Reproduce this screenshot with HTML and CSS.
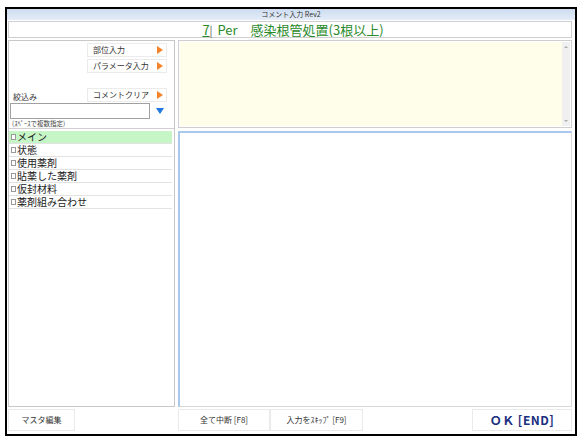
FILE: index.html
```html
<!DOCTYPE html>
<html lang="ja">
<head>
<meta charset="utf-8">
<link rel="stylesheet" href="styles.css">
</head>
<body>
<div class="frame">
  <div class="titlebar">コメント入力 Rev2</div>
  <div class="header"><span class="num">7</span><span class="bar">|</span> Per　感染根管処置(3根以上)</div>
  <div class="main">
    <div class="left">
      <div class="filter">
        <div class="btnrow"><div class="pbtn">部位入力<span class="tri"></span></div></div>
        <div class="btnrow"><div class="pbtn">パラメータ入力<span class="tri"></span></div></div>
        <div class="labelrow">
          <span class="lbl">絞込み</span>
          <div class="pbtn">コメントクリア<span class="tri"></span></div>
        </div>
        <div class="inputrow">
          <div class="input"></div>
          <span class="down"></span>
        </div>
        <div class="hint">(ｽﾍﾟｰｽで複数指定)</div>
      </div>
      <div class="list">
        <div class="item sel"><span class="cb"></span>メイン</div>
        <div class="item"><span class="cb"></span>状態</div>
        <div class="item"><span class="cb"></span>使用薬剤</div>
        <div class="item"><span class="cb"></span>貼薬した薬剤</div>
        <div class="item"><span class="cb"></span>仮封材料</div>
        <div class="item"><span class="cb"></span>薬剤組み合わせ</div>
      </div>
    </div>
    <div class="right">
      <div class="memo">
        <div class="memo-area"></div>
        <div class="scroll"><span class="up"></span><span class="dn"></span></div>
      </div>
      <div class="content"></div>
    </div>
  </div>
  <div class="footer">
    <div class="fbtn master">マスタ編集</div>
    <div class="fbtn stop">全て中断 [F8]</div>
    <div class="fbtn skip">入力をｽｷｯﾌﾟ [F9]</div>
    <div class="spacer"></div>
    <div class="fbtn ok">ＯＫ [END]</div>
  </div>
</div>
</body>
</html>
```

FILE: styles.css
```css
* { box-sizing: border-box; }
html, body { margin: 0; padding: 0; background: #fff; }
body { font-family: "Noto Sans CJK JP", "Noto Sans", sans-serif; color: #222; }

.frame {
  margin: 7px 0 0 5px;
  width: 572px;
  height: 429px;
  border: 2px solid #000;
  display: flex;
  flex-direction: column;
  background: #fff;
}
.titlebar {
  height: 11px;
  background: linear-gradient(#cddcef, #e4edf8);
  font-size: 7px;
  line-height: 11px;
  text-align: center;
  color: #333;
}
.header {
  margin: 1px 3px 0 1px;
  height: 17px;
  border: 1px solid #cfcfcf;
  text-align: center;
  font-size: 13px;
  line-height: 15px;
  color: #2a8a2a;
  padding-left: 6px;
}
.header .num { text-decoration: underline; }
.header .bar { font-size: 11px; color: #555; margin-right: 2px; }

.main {
  flex: 1;
  display: flex;
  gap: 3px;
  margin: 2px 3px 0 1px;
  min-height: 0;
}
.left {
  width: 167px;
  border: 1px solid #c8c8c8;
  display: flex;
  flex-direction: column;
}
.filter {
  height: 88px;
  border-bottom: 1px solid #d0d0d0;
  padding: 2px 0 0 1px;
  display: flex;
  flex-direction: column;
}
.btnrow { display: flex; justify-content: flex-end; padding-right: 7px; margin-bottom: 2px; }
.pbtn {
  position: relative;
  width: 80px;
  height: 14px;
  border: 1px solid #ebebeb;
  background: #fff;
  font-size: 8px;
  line-height: 12px;
  padding-left: 5px;
  color: #333;
}
.tri {
  position: absolute;
  right: 3px;
  top: 2px;
  width: 0; height: 0;
  border-top: 4px solid transparent;
  border-bottom: 4px solid transparent;
  border-left: 6px solid #f5832a;
}
.labelrow {
  margin-top: 13px;
  display: flex;
  justify-content: space-between;
  align-items: flex-end;
  padding-right: 7px;
  padding-left: 3px;
}
.lbl { font-size: 8px; line-height: 10px; color: #333; }
.inputrow { display: flex; align-items: center; margin-top: 1px; }
.input {
  width: 140px;
  height: 16px;
  border: 1px solid #a0a0a0;
  background: #fff;
}
.down {
  margin-left: 6px;
  width: 0; height: 0;
  border-left: 4px solid transparent;
  border-right: 4px solid transparent;
  border-top: 6px solid #1f7be0;
}
.hint { font-size: 6.5px; line-height: 8px; padding-left: 2px; color: #444; margin-top: 0; }

.list { flex: 1; padding: 2px 2px 0 0; }
.item {
  height: 13px;
  border-bottom: 1px solid #e2e2e2;
  font-size: 10px;
  line-height: 12px;
  display: flex;
  align-items: center;
  color: #222;
}
.item.sel { background: #c6f6c6; }
.cb {
  width: 5px; height: 6px;
  border: 1px solid #999;
  margin: 0 1px 0 2px;
  background: #fff;
}

.right { flex: 1; display: flex; flex-direction: column; gap: 3px; min-width: 0; }
.memo {
  height: 88px;
  border: 1px solid #cfcfcf;
  display: flex;
  padding: 1px;
}
.memo-area { flex: 1; background: #fffeea; }
.scroll {
  width: 8px;
  background: #f0f0f0;
  display: flex;
  flex-direction: column;
  justify-content: space-between;
  align-items: center;
  padding: 4px 0;
}
.scroll .up { width: 0; height: 0; border-left: 2px solid transparent; border-right: 2px solid transparent; border-bottom: 2px solid #aaa; }
.scroll .dn { width: 0; height: 0; border-left: 2px solid transparent; border-right: 2px solid transparent; border-top: 2px solid #aaa; }
.content {
  flex: 1;
  border-top: 2px solid #a9c9ec;
  border-left: 2px solid #a9c9ec;
  border-right: 1px solid #d8d8d8;
  border-bottom: 1px solid #d8d8d8;
  background: #fff;
}

.footer {
  height: 27px;
  display: flex;
  align-items: center;
  padding: 0 3px 2px 1px;
}
.fbtn {
  height: 22px;
  border: 1px solid #eaeaea;
  font-size: 8px;
  line-height: 20px;
  text-align: center;
  color: #333;
}
.master { width: 67px; }
.stop { width: 92px; margin-left: 103px; }
.skip { width: 93px; }
.spacer { flex: 1; }
.ok { width: 100px; font-size: 12px; font-weight: bold; color: #1a2f80; letter-spacing: 0.5px; }
```
